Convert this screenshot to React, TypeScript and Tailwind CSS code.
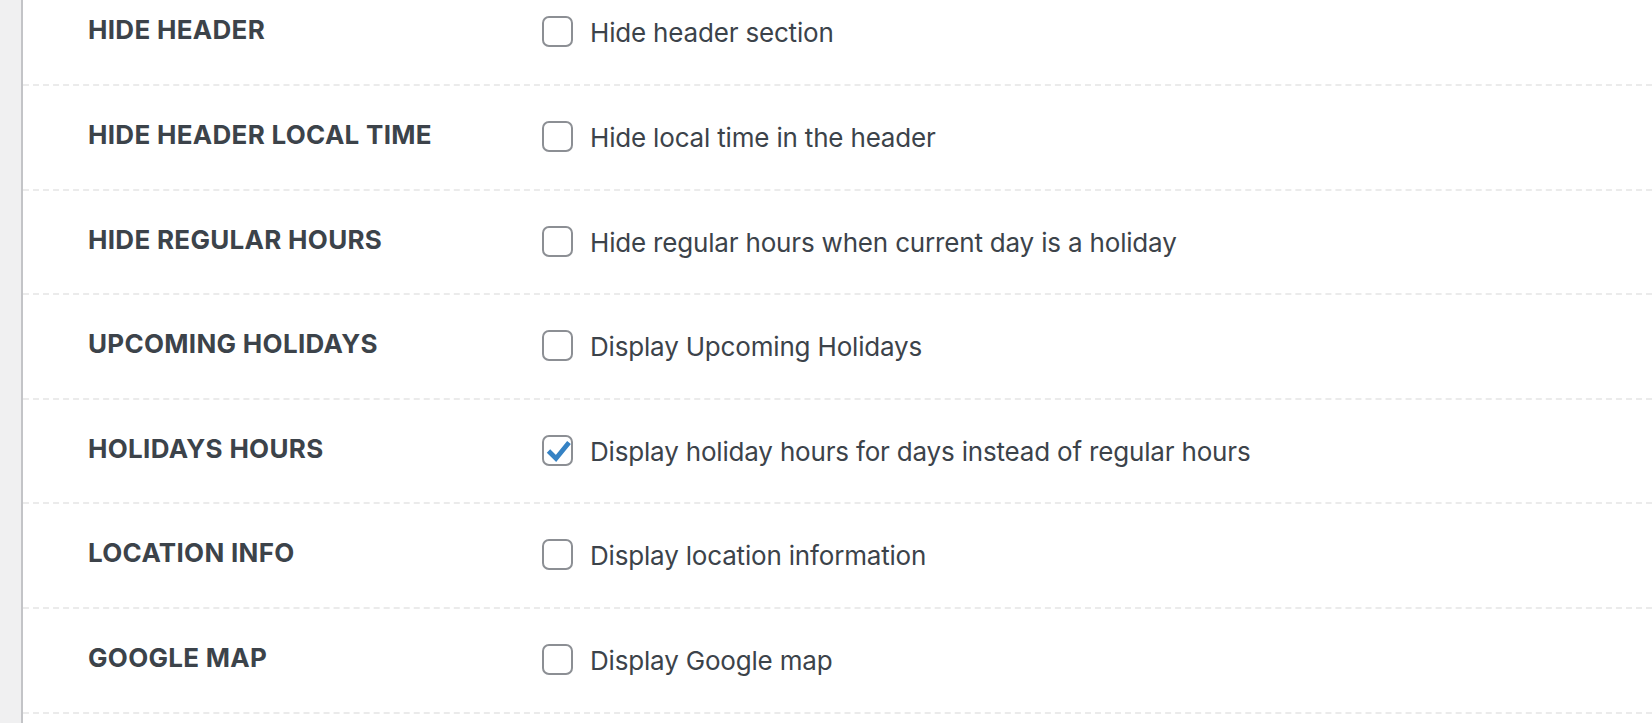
import React from "react";

type Row = { label: string; desc: string; checked: boolean };

const rows: Row[] = [
  { label: "HIDE HEADER", desc: "Hide header section", checked: false },
  { label: "HIDE HEADER LOCAL TIME", desc: "Hide local time in the header", checked: false },
  { label: "HIDE REGULAR HOURS", desc: "Hide regular hours when current day is a holiday", checked: false },
  { label: "UPCOMING HOLIDAYS", desc: "Display Upcoming Holidays", checked: false },
  { label: "HOLIDAYS HOURS", desc: "Display holiday hours for days instead of regular hours", checked: true },
  { label: "LOCATION INFO", desc: "Display location information", checked: false },
  { label: "GOOGLE MAP", desc: "Display Google map", checked: false },
  { label: "", desc: "", checked: false },
];

function Checkbox({ checked }: { checked: boolean }) {
  return (
    <div className="w-[31px] h-[31px] shrink-0 rounded-[7px] border-2 border-[#8c8f94] bg-white">
      {checked && (
        <svg width="27" height="27" viewBox="0 0 27 27" className="block">
          <polyline
            points="4.5,14 12,21.5 25,5.5"
            fill="none"
            stroke="#3582c4"
            strokeWidth="4.8"
            strokeLinejoin="miter"
            strokeLinecap="butt"
          />
        </svg>
      )}
    </div>
  );
}

export default function App() {
  return (
    <div className="flex h-[723px] w-[1652px] overflow-hidden bg-white font-[Inter,sans-serif] text-[#3c434a]">
      <div className="w-[23px] shrink-0 bg-[#f0f0f1] border-r-2 border-[#c3c4c7]" />
      <div className="flex-1 flex flex-col mt-[-18.6px]">
        {rows.map((r, i) => (
          <div
            key={i}
            className="flex h-[104.6px] shrink-0 border-b-2 border-dashed border-[#ebebeb]"
          >
            <div className="w-[519px] shrink-0 pl-[65px] pt-[33px] text-[26px] leading-[32px] font-bold tracking-[0.3px]">
              {r.label}
            </div>
            {r.desc && (
              <div className="flex items-start gap-[17px] pt-[35px]">
                <Checkbox checked={r.checked} />
                <span className="mt-[1px] text-[26px] leading-[32px] tracking-[-0.18px]">{r.desc}</span>
              </div>
            )}
          </div>
        ))}
      </div>
    </div>
  );
}
